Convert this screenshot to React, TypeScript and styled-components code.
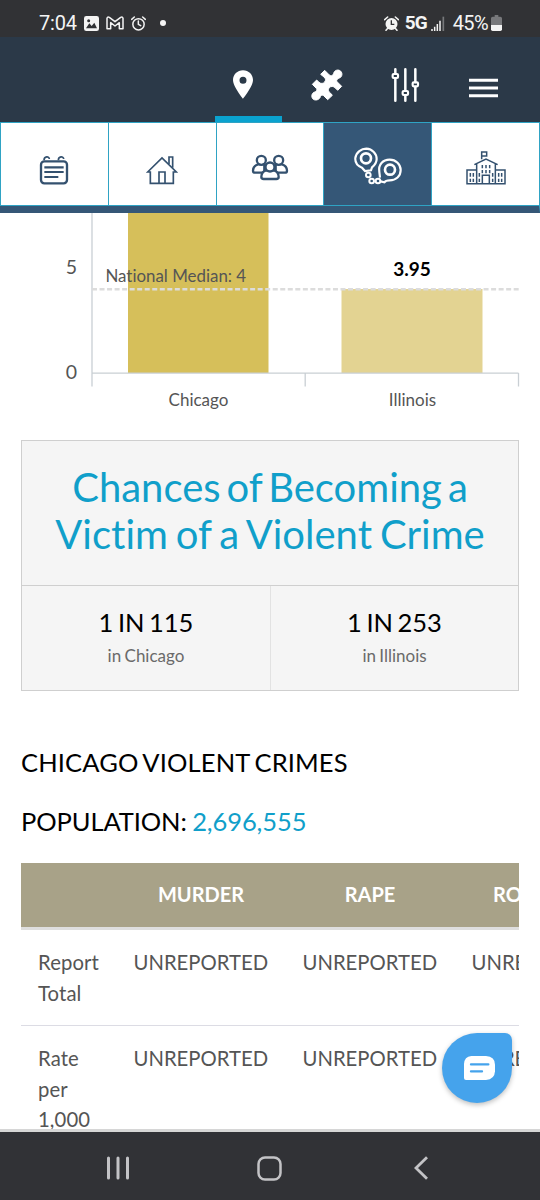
import React from 'react';
import styled, { createGlobalStyle } from 'styled-components';


const GlobalStyle = createGlobalStyle`
  * {
    box-sizing: border-box;
  }
  body {
    margin: 0;
    background-color: #fff;
    font-family: Lato, "Open Sans", sans-serif;
    font-variant-ligatures: none;
  }
`

type rateType = {
  value: string
  place: string
}

type rowType = {
  label: string
  cells: Array<string>
}

const rates: Array<rateType> = [
  {value: '1 IN 115', place: 'in Chicago'},
  {value: '1 IN 253', place: 'in Illinois'},
]

const columns = ['', 'MURDER', 'RAPE', 'ROBBERY']

const rows: Array<rowType> = [
  {label: 'Report Total', cells: ['UNREPORTED', 'UNREPORTED', 'UNREPORTED']},
  {label: 'Rate per 1,000', cells: ['UNREPORTED', 'UNREPORTED', 'UNREPORTED']},
]


const PictureIcon = () => (
  <svg width="15" height="15" viewBox="0 0 45 45">
    <rect width="45" height="45" rx="7" fill="#f4f4f4"/>
    <path d="M6 37 L16 22 L23 30 L31 20 L39 37 Z" fill="#313235"/>
    <circle cx="14" cy="14" r="4.500" fill="#313235"/>
  </svg>
)

const MailIcon = () => (
  <svg width="18" height="14" viewBox="0 0 54 42" fill="none" stroke="#f4f4f4" strokeWidth="4.500" strokeLinejoin="round">
    <path d="M3 38 V7 Q4 1 10 4 L27 17 L44 4 Q50 1 51 7 V38 H40 V20 L27 30 L14 20 V38 Z"/>
  </svg>
)

const AlarmIcon = () => (
  <svg width="15" height="15" viewBox="0 0 45 45" fill="none" stroke="#f4f4f4" strokeWidth="4.500" strokeLinecap="round">
    <circle cx="22.500" cy="25" r="17"/>
    <path d="M22 15 V25 L29 29 M2 10 L10 3 M35 3 L43 10"/>
  </svg>
)

const AlarmSolidIcon = () => (
  <svg width="15" height="15" viewBox="0 0 45 45">
    <circle cx="22.500" cy="24" r="18" fill="#f4f4f4"/>
    <path d="M2 11 L11 3 M34 3 L43 11 M10 38 L6 43 M35 38 L39 43" stroke="#f4f4f4" strokeWidth="4.500" strokeLinecap="round"/>
    <path d="M22 13 V25 H31" fill="none" stroke="#313235" strokeWidth="4"/>
  </svg>
)

const SignalIcon = () => (
  <svg width="14" height="15" viewBox="0 0 42 45">
    <path d="M3 45 V39 M11 45 V32 M19 45 V24 M27 45 V14" stroke="#f4f4f4" strokeWidth="4.500"/>
    <path d="M37 45 V2" stroke="#77787b" strokeWidth="5"/>
  </svg>
)

const BatteryIcon = () => (
  <svg width="11" height="16" viewBox="0 0 33 48">
    <path d="M11 0 H22 V5 H28 Q33 5 33 10 V30 H0 V10 Q0 5 5 5 H11 Z" fill="#77787b"/>
    <path d="M0 30 H33 V43 Q33 48 28 48 H5 Q0 48 0 43 Z" fill="#f4f4f4"/>
  </svg>
)

const PinIcon = () => (
  <svg width="20" height="29" viewBox="0 0 60 87">
    <path fillRule="evenodd" fill="#fff" d="M30 1 C13 1 0 14 0 30 C0 50 30 86 30 86 C30 86 60 50 60 30 C60 14 47 1 30 1 Z M30 20 A10.500 10.500 0 1 1 30 41 A10.500 10.500 0 1 1 30 20 Z"/>
  </svg>
)

const PuzzleIcon = () => (
  <svg width="32" height="32" viewBox="0 0 96 96">
    <path fill="#fff" stroke="#fff" strokeWidth="3" strokeLinejoin="round" d="M29 16 L41 4 L55 18 C62 24 68 17 69 10 C74 1 86 1 91 9 C95 16 92 25 85 27 C77 31 75 35 79 39 L92 52 L80 64 L73 57 C68 51 59 51 55 56 C50 62 52 67 58 72 L64 79 L50 92 L38 80 C33 76 28 80 27 86 C22 94 11 95 6 90 C0 84 2 73 9 70 C17 67 20 62 15 57 L4 46 L17 33 L24 40 C30 45 37 44 41 39 C45 34 44 28 39 24 Z"/>
  </svg>
)

const SlidersIcon = () => (
  <svg width="29" height="34" viewBox="0 0 87 102" fill="none" stroke="#fff" strokeWidth="7.500" strokeLinecap="round">
    <path d="M13 4 V17 M13 32 V98 M43 4 V67 M43 83 V98 M73 4 V42 M73 57 V98"/>
    <rect x="5" y="18" width="16" height="12" rx="3" strokeWidth="6.500"/>
    <rect x="35" y="69" width="16" height="12" rx="3" strokeWidth="6.500"/>
    <rect x="65" y="43" width="16" height="12" rx="3" strokeWidth="6.500"/>
  </svg>
)

const MenuIcon = () => (
  <svg width="29" height="20" viewBox="0 0 87 60">
    <path d="M0 6.500 H87 M0 30 H87 M0 53.500 H87" stroke="#fff" strokeWidth="9"/>
  </svg>
)

const CalendarIcon = () => (
  <svg width="30" height="30" viewBox="0 0 90 90" fill="none" stroke="#34516f">
    <rect x="6" y="19" width="78" height="66" rx="10" strokeWidth="7"/>
    <path d="M15 16 C15 3 31 3 31 12 M58 16 C58 3 74 3 74 12" strokeWidth="5"/>
    <path d="M16 37 H74 M16 51 H74 M16 66 H58" strokeWidth="6.500"/>
  </svg>
)

const HouseIcon = () => (
  <svg width="32" height="30" viewBox="0 0 96 90" fill="none" stroke="#34516f" strokeWidth="5">
    <path d="M5 51 L48 9 L91 51 H82 V85 H13 V51 Z"/>
    <path d="M69 27 V6 H80 V38 M39 85 V51 H57 V85"/>
  </svg>
)

const PeopleIcon = () => (
  <svg width="38" height="31" viewBox="20 42 114 93" fill="#fff" stroke="#34516f" strokeWidth="7">
    <path d="M41 73 C29 77 26 86 26 92 Q26 98 33 98 H60 V73 Z"/>
    <path d="M113 73 C125 77 128 86 128 92 Q128 98 121 98 H94 V73 Z"/>
    <circle cx="51" cy="61" r="13.500"/>
    <circle cx="103" cy="61" r="13.500"/>
    <path d="M63 92 C53 96 51 106 51 111 Q51 117 58 117 H96 Q103 117 103 111 C103 106 101 96 91 92 Z"/>
    <circle cx="77" cy="81" r="13.500"/>
  </svg>
)

const HandcuffsIcon = () => (
  <svg width="48" height="38" viewBox="0 0 144 114" fill="none" stroke="#fff" strokeWidth="6.500">
    <path d="M24 62 C8 56 3 44 4 33 C7 15 22 5 37 5 C55 6 68 20 68 36 C68 48 60 56 54 61 L51 70 L33 72 Z"/>
    <circle cx="36" cy="34" r="15" strokeWidth="8"/>
    <path d="M78 92 L76 75 C72 52 87 38 107 38 C126 38 140 52 140 69 C140 88 126 100 107 100 C99 100 94 101 91 106 L80 103"/>
    <circle cx="108" cy="68" r="15" strokeWidth="8"/>
    <circle cx="43" cy="84" r="7" strokeWidth="6"/>
    <circle cx="53" cy="102" r="7" strokeWidth="6"/>
    <circle cx="72" cy="102" r="7" strokeWidth="6"/>
  </svg>
)

const SchoolIcon = () => (
  <svg width="40" height="34" viewBox="0 0 120 102" fill="none" stroke="#34516f" strokeWidth="4.500">
    <path d="M32 98 H3 V57 H32 M88 57 H117 V98 H32 V39 M88 39 V98 M25 41 L60 24 L95 41 M49 98 V73 H70 V98"/>
    <path d="M47 25 V3 H62 V15 H49"/>
    <path d="M13 66 V77 M22 66 V77 M98 66 V77 M107 66 V77 M13 83 V93 M22 83 V93 M98 83 V93 M107 83 V93 M49 42 V52 M60 42 V52 M71 42 V52 M49 57 V67 M60 57 V67 M71 57 V67 M40 66 V77 M80 66 V77 M40 83 V93 M80 83 V93"/>
  </svg>
)

const ChatIcon = () => (
  <svg width="31" height="24" viewBox="0 0 93 72">
    <path d="M22 0 H66 Q93 2 93 26 V46 Q92 70 66 72 H6 Q0 72 0 66 V24 Q1 2 22 0 Z" fill="#fff"/>
    <path d="M21 25 H73 M21 46 H54" stroke="#45a3ec" strokeWidth="7" strokeLinecap="round"/>
  </svg>
)

const RateChart = () => (
  <Chart width="540" height="227" viewBox="0 213 540 227">
    <rect x="128" y="213" width="140.500" height="160" fill="#d6bf5a"/>
    <rect x="341.500" y="289" width="141" height="84" fill="#e3d392"/>
    <path d="M92 213 V386.500 M92 373.200 H518.500 M305.200 373 V386.500 M518.500 373 V386.500" fill="none" stroke="#c9cfd4" strokeWidth="1.300"/>
    <path d="M92 289.300 H519" stroke="#dcdcdc" strokeWidth="2.400" strokeDasharray="5 2.530"/>
    <AxisText x="71.500" y="274" $size={19.5}>5</AxisText>
    <AxisText x="71.500" y="378.500" $size={19.5}>0</AxisText>
    <AxisText x="175.800" y="281.700" $size={16.9}>National Median: 4</AxisText>
    <AxisText x="198.500" y="405.500" $size={17}>Chicago</AxisText>
    <AxisText x="412.500" y="405.500" $size={17}>Illinois</AxisText>
    <ValueText x="412" y="275.500">3.95</ValueText>
  </Chart>
)

const tabs = [
  {icon: <CalendarIcon/>, active: false},
  {icon: <HouseIcon/>, active: false},
  {icon: <PeopleIcon/>, active: false},
  {icon: <HandcuffsIcon/>, active: true},
  {icon: <SchoolIcon/>, active: false},
]

const App = () => {
  return (
    <Phone>
      <GlobalStyle/>
      <StatusBar>
        <StatusGroup $gap={7}>
          <StatusText>7:04</StatusText>
          <PictureIcon/>
          <MailIcon/>
          <AlarmIcon/>
          <Dot/>
        </StatusGroup>
        <StatusGroup $gap={4}>
          <AlarmSolidIcon/>
          <Network>5G</Network>
          <SignalIcon/>
          <Percent>45%</Percent>
          <BatteryIcon/>
        </StatusGroup>
      </StatusBar>
      <Header>
        <HeaderItem $width={67} $active><PinIcon/></HeaderItem>
        <HeaderItem $width={100}><PuzzleIcon/></HeaderItem>
        <HeaderItem $width={57}><SlidersIcon/></HeaderItem>
        <HeaderItem $width={99} $drop={7}><MenuIcon/></HeaderItem>
      </Header>
      <Tabs>
        {tabs.map((tab, index) => <Tab key={index} $active={tab.active}>{tab.icon}</Tab>)}
      </Tabs>
      <Content>
        <RateChart/>
        <Card>
          <CardTitle>
            <TitleLine $spacing={-4.2}>Chances of Becoming a </TitleLine>
            <TitleLine $spacing={-2.3}>Victim of a Violent Crime</TitleLine>
          </CardTitle>
          <Rates>
            {rates.map(rate => (
              <Rate key={rate.place}>
                <RateValue>{rate.value}</RateValue>
                <RatePlace>{rate.place}</RatePlace>
              </Rate>
            ))}
          </Rates>
        </Card>
        <Heading>CHICAGO VIOLENT CRIMES</Heading>
        <Population>POPULATION: <span>2,696,555</span></Population>
        <TableWrapper>
          <HeadRow>
            {columns.map(column => <HeadCell key={column}>{column}</HeadCell>)}
          </HeadRow>
          {rows.map(row => (
            <Row key={row.label}>
              <LabelCell>{row.label}</LabelCell>
              {row.cells.map((cell, index) => <Cell key={index}>{cell}</Cell>)}
            </Row>
          ))}
        </TableWrapper>
      </Content>
      <ChatButton><ChatIcon/></ChatButton>
      <NavBar>
        <svg width="24" height="24" viewBox="0 0 24 24" stroke="#c3c3c6" strokeWidth="3" strokeLinecap="round">
          <path d="M2.500 2 V22 M12 2 V22 M21.500 2 V22"/>
        </svg>
        <HomeIcon width="25" height="25" viewBox="0 0 25 25" fill="none" stroke="#c3c3c6" strokeWidth="2.500">
          <rect x="1.500" y="1.500" width="22" height="22" rx="6.500"/>
        </HomeIcon>
        <svg width="14" height="24" viewBox="0 0 14 24" fill="none" stroke="#c3c3c6" strokeWidth="2.800">
          <path d="M13 1.200 L2 12 L13 22.800"/>
        </svg>
      </NavBar>
    </Phone>
  );
};

export default App;


const Phone = styled.div`
  position: relative;
  display: flex;
  flex-direction: column;
  width: 540px;
  height: 1200px;
  overflow: hidden;
  background-color: #fff;
`
const StatusBar = styled.div`
  display: flex;
  justify-content: space-between;
  align-items: center;
  flex-shrink: 0;
  height: 37px;
  padding: 9px 38px 0 39px;
  background-color: #313235;
`
const StatusGroup = styled.div<{$gap: number}>`
  display: flex;
  align-items: center;
  gap: ${props => props.$gap}px;
`
const StatusText = styled.span`
  font-family: Roboto, sans-serif;
  font-size: 20px;
  line-height: 20px;
  letter-spacing: -0.2px;
  color: #f4f4f4;
`
const Percent = styled(StatusText)`
  margin: 0 -1px 0 4px;
  letter-spacing: -0.6px;
`
const Network = styled(StatusText)`
  margin-left: 2px;
  font-weight: 700;
  font-size: 19px;
  letter-spacing: -1px;
`
const Dot = styled.span`
  width: 6px;
  height: 6px;
  margin-left: 7px;
  border-radius: 50%;
  background-color: #f4f4f4;
`
const Header = styled.header`
  display: flex;
  flex-shrink: 0;
  height: 85px;
  padding-left: 215px;
  background-color: #2b3948;
`
const HeaderItem = styled.div<{$width: number, $active?: boolean, $drop?: number}>`
  display: flex;
  justify-content: center;
  align-items: center;
  width: ${props => props.$width}px;
  padding: ${props => 16 + (props.$drop || 0)}px 11px 0 0;
  border-bottom: 6px solid ${props => props.$active ? '#0aa2cf' : 'transparent'};
`
const Tabs = styled.nav`
  display: grid;
  grid-template-columns: repeat(5, 1fr);
  flex-shrink: 0;
  height: 91px;
  border-bottom: 7px solid #355777;
  border-right: 1px solid #2fa3c4;
`
const Tab = styled.div<{$active: boolean}>`
  display: flex;
  justify-content: center;
  align-items: flex-end;
  padding-bottom: 20px;
  border: solid #2fa3c4;
  border-width: 1px 0 1px 1px;
  background-color: ${props => props.$active ? '#355777' : '#fff'};
`
const Content = styled.main`
  flex: 1;
  min-height: 0;
  overflow: hidden;
`
const Chart = styled.svg`
  display: block;
`
const AxisText = styled.text<{$size: number}>`
  font-size: ${props => props.$size}px;
  text-anchor: middle;
  fill: #555;
`
const ValueText = styled.text`
  font-size: 19px;
  font-weight: 700;
  text-anchor: middle;
  fill: #000;
`
const Card = styled.section`
  height: 251px;
  margin: 0 21px;
  border: 1px solid #cfcfcf;
  background-color: #f5f5f5;
`
const CardTitle = styled.h2`
  height: 145px;
  margin: 0;
  padding-top: 23px;
  border-bottom: 1px solid #cfcfcf;
  font-size: 40px;
  font-weight: 400;
  line-height: 47px;
  text-align: center;
  color: #109fca;
`
const TitleLine = styled.span<{$spacing: number}>`
  display: block;
  word-spacing: ${props => props.$spacing}px;
`
const Rates = styled.div`
  display: grid;
  grid-template-columns: 1fr 1fr;
  height: 104px;
`
const Rate = styled.div`
  padding-top: 20px;
  text-align: center;

  & + & {
    border-left: 1px solid #e2e2e2;
  }
`
const RateValue = styled.div`
  font-size: 25.5px;
  line-height: 32px;
  word-spacing: -2px;
  color: #000;
`
const RatePlace = styled.div`
  margin-top: 6px;
  font-size: 17px;
  line-height: 24px;
  word-spacing: -1px;
  color: #6a6a6a;
`
const Heading = styled.h3`
  margin: 55px 21px 0;
  font-size: 25.5px;
  font-weight: 400;
  line-height: 32px;
  letter-spacing: 0.15px;
  word-spacing: -2px;
  color: #000;
`
const Population = styled(Heading)`
  margin-top: 27px;
  letter-spacing: -0.1px;
  word-spacing: -1px;

  span {
    color: #109fca;
  }
`
const TableWrapper = styled.div`
  margin: 26px 21px 0;
  overflow: hidden;
`
const Row = styled.div`
  display: grid;
  grid-template-columns: 95.5px repeat(3, 169px);
  width: 603px;
  border-bottom: 1px solid #dcdce4;
`
const HeadRow = styled(Row)`
  height: 67px;
  border-bottom: 3px solid #dedede;
  background-color: #a8a288;
`
const Cell = styled.div`
  padding: 17px 17px 17px;
  font-size: 20.3px;
  line-height: 30.5px;
  color: #555;
`
const LabelCell = styled(Cell)`
  letter-spacing: 0.1px;
`
const HeadCell = styled(Cell)`
  padding-top: 16px;
  font-size: 20px;
  font-weight: 700;
  text-align: center;
  color: #fff;
`
const ChatButton = styled.button`
  position: absolute;
  right: 28px;
  bottom: 97px;
  display: flex;
  justify-content: center;
  align-items: center;
  width: 70px;
  height: 70px;
  padding: 0 0 0 5px;
  border: none;
  border-radius: 50% 7px 50% 50%;
  background-color: #45a3ec;
  box-shadow: 0 2px 5px rgba(0, 0, 0, 0.25);
`
const NavBar = styled.footer`
  display: flex;
  justify-content: space-between;
  align-items: center;
  flex-shrink: 0;
  height: 71px;
  padding: 4px 112px 0 106px;
  border-top: 3px solid #d6d6d6;
  background-color: #313236;
`
const HomeIcon = styled.svg`
  margin-right: 5px;
`
